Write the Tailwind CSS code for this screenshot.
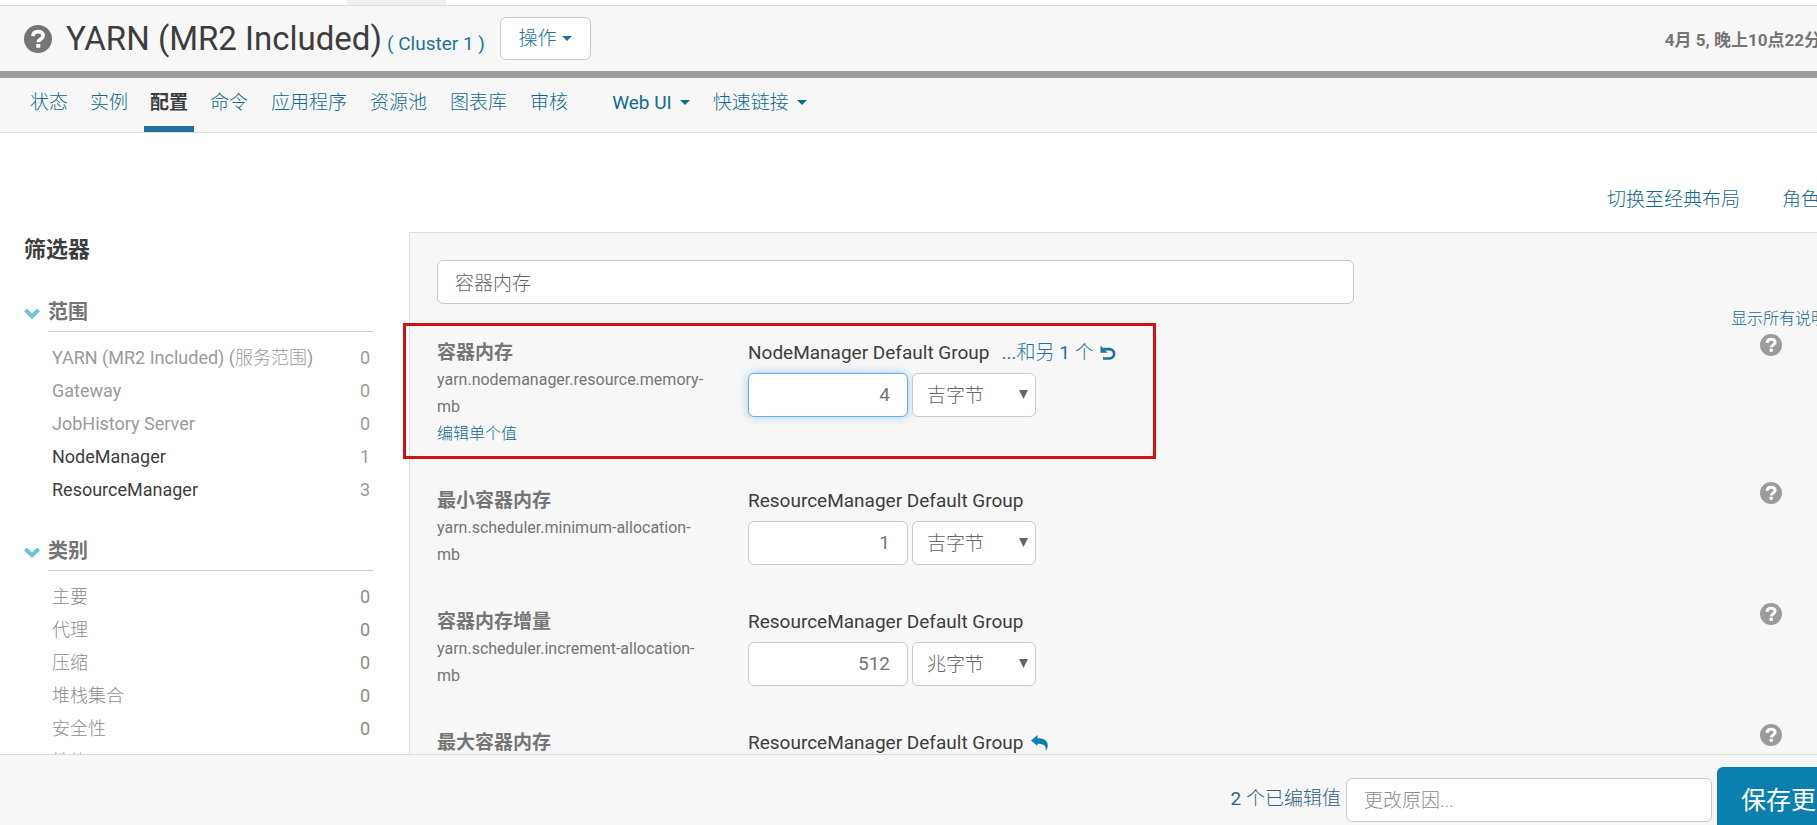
<!DOCTYPE html>
<html lang="zh-CN">
<head>
<meta charset="utf-8">
<title>YARN (MR2 Included) - 配置</title>
<script src="https://cdn.jsdelivr.net/npm/@tailwindcss/browser@4"></script>
</head>
<body class="h-screen overflow-hidden bg-white font-['Roboto','Noto_Sans_CJK_SC',sans-serif] text-[19px] leading-[27px] text-[#3d3d3d]">
<svg class="hidden">
  <symbol id="help" viewBox="0 0 28 28"><circle cx="14" cy="14" r="14" fill="currentColor"/><path d="M9 11.200C9.200 8 11.300 6.600 14.200 6.600c2.900 0 5 1.500 5 4 0 3.600-4.800 3.400-4.800 6.600" fill="none" stroke="#fff" stroke-width="3.800"/><rect x="12.300" y="18.900" width="4" height="3.800" rx=".5" fill="#fff"/></symbol>
  <symbol id="caret" viewBox="0 0 10 5"><path d="M0 0h10L5 5z" fill="currentColor"/></symbol>
  <symbol id="chevron" viewBox="0 0 16 11"><path d="M1.400 2 8 8.200 14.600 2" fill="none" stroke="currentColor" stroke-width="4"/></symbol>
  <symbol id="arrow" viewBox="0 0 9 9"><path d="M0 0h9L4.500 9z" fill="currentColor"/></symbol>
  <symbol id="undo" viewBox="0 0 16 16"><path d="M3.200 4.200h6.300a4.600 4.600 0 1 1 0 9.300H3" fill="none" stroke="currentColor" stroke-width="2.700"/><path d="M.5.5v7.200h7.200z" fill="currentColor"/></symbol>
  <symbol id="reply" viewBox="0 0 17 16"><path d="M0 5.500 6.500 0v3.200c6.500 0 10.300 2.600 10.300 7.200 0 2-.8 3.800-2 5.400.6-4.600-1.800-7-8.300-7V11z" fill="currentColor"/></symbol>
</svg>

<!-- The page is slightly wider than the window, so its right edge is cut off -->
<div class="flex h-full w-[calc(100%+40px)] flex-col">
  <div class="h-[5px] shrink-0 pl-[347px]"><div class="h-full w-[99px] bg-[#efefef]"></div></div>
  <header class="flex h-[73px] shrink-0 items-center border-t border-b-[7px] border-t-[#dcdcdc] border-b-[#9c9c9c] bg-[#f7f7f7] pr-[36px] pl-6">
    <button class="text-[#757575]" aria-label="帮助"><svg class="size-7"><use href="#help"/></svg></button>
    <h1 class="ml-[14px] text-[33px] leading-[44px]">YARN (MR2 Included)</h1>
    <a href="#" class="mt-[9px] ml-[5px] text-[19px] text-[#20739a]">( Cluster 1 )</a>
    <button class="ml-[15px] flex h-[43px] w-[91px] items-center justify-center gap-[6px] rounded-md border border-[#c9c9c9] bg-white text-[#20739a]"><span class="font-light">操作</span><svg class="h-[5px] w-[10px]"><use href="#caret"/></svg></button>
    <span class="mt-[3px] ml-auto text-[17px] font-bold text-[#757575]">4月 5, 晚上10点22分</span>
  </header>
  <nav class="flex h-[55px] shrink-0 border-b border-[#dcdcdc] bg-[#f7f7f7] pl-6 font-light text-[#126a92]">
    <a href="#" class="px-[6px] pt-[11px]">状态</a>
    <a href="#" class="ml-[10px] px-[6px] pt-[11px]">实例</a>
    <a href="#" class="ml-[10px] border-b-[6px] border-[#20739a] px-[6px] pt-[11px] font-bold text-[#3d3d3d]">配置</a>
    <a href="#" class="ml-[10px] px-[6px] pt-[11px]">命令</a>
    <a href="#" class="ml-[11px] px-[6px] pt-[11px]">应用程序</a>
    <a href="#" class="ml-[11px] px-[6px] pt-[11px]">资源池</a>
    <a href="#" class="ml-[11px] px-[6px] pt-[11px]">图表库</a>
    <a href="#" class="ml-[11px] px-[6px] pt-[11px]">审核</a>
    <button class="ml-8 flex items-center gap-2 self-start px-[6px] pt-[11px]"><span class="font-normal">Web UI</span><svg class="h-[5px] w-[10px]"><use href="#caret"/></svg></button>
    <button class="ml-[11px] flex items-center gap-2 self-start px-[6px] pt-[11px]"><span>快速链接</span><svg class="h-[5px] w-[10px]"><use href="#caret"/></svg></button>
  </nav>

  <div class="min-h-0 flex-1 overflow-hidden">
    <div class="flex justify-end gap-[42px] pt-[53px] pr-[18px] pb-[19px] font-light text-[#126a92]">
      <a href="#">切换至经典布局</a>
      <a href="#">角色组</a>
    </div>
    <div class="flex">
      <aside class="w-[409px] shrink-0 pr-9 pl-6">
        <h2 class="text-[22px] leading-[35px] font-bold">筛选器</h2>
        <section class="mt-8">
          <button class="flex w-full items-start gap-2 text-left"><svg class="mt-[9px] h-[11px] w-4 text-[#72c0dc]"><use href="#chevron"/></svg><span class="flex-1 border-b border-[#cfcfcf] pb-[5px] text-[20px] font-bold text-[#757575]">范围</span></button>
          <ul class="mt-[9px] pr-[3px] pl-7 text-[18px] leading-[33px] text-[#9b9b9b]">
            <li><a href="#" class="flex justify-between"><span>YARN (MR2 Included) (<span class="font-light">服务范围</span>)</span><span>0</span></a></li>
            <li><a href="#" class="flex justify-between"><span>Gateway</span><span>0</span></a></li>
            <li><a href="#" class="flex justify-between"><span>JobHistory Server</span><span>0</span></a></li>
            <li><a href="#" class="flex justify-between"><span class="text-[#3d3d3d]">NodeManager</span><span>1</span></a></li>
            <li><a href="#" class="flex justify-between"><span class="text-[#3d3d3d]">ResourceManager</span><span>3</span></a></li>
          </ul>
        </section>
        <section class="mt-8">
          <button class="flex w-full items-start gap-2 text-left"><svg class="mt-[9px] h-[11px] w-4 text-[#72c0dc]"><use href="#chevron"/></svg><span class="flex-1 border-b border-[#cfcfcf] pb-[5px] text-[20px] font-bold text-[#757575]">类别</span></button>
          <ul class="mt-[9px] pr-[3px] pl-7 text-[18px] leading-[33px] text-[#8c8c8c]">
            <li><a href="#" class="flex justify-between"><span class="font-light">主要</span><span>0</span></a></li>
            <li><a href="#" class="flex justify-between"><span class="font-light">代理</span><span>0</span></a></li>
            <li><a href="#" class="flex justify-between"><span class="font-light">压缩</span><span>0</span></a></li>
            <li><a href="#" class="flex justify-between"><span class="font-light">堆栈集合</span><span>0</span></a></li>
            <li><a href="#" class="flex justify-between"><span class="font-light">安全性</span><span>0</span></a></li>
            <li><a href="#" class="flex justify-between"><span class="font-light">性能</span><span>0</span></a></li>
          </ul>
        </section>
      </aside>

      <main class="flex-1 border-t border-l border-[#dcdcdc] bg-[#f7f7f7] pt-[27px] pl-[27px]">
        <input type="text" value="容器内存" aria-label="搜索" class="block h-11 w-[917px] rounded-md border border-[#c9c9c9] bg-white px-[17px] pb-[2px] font-light text-[#666] outline-none">
        <div class="text-right"><a href="#" class="mr-[30px] text-[16px] font-light text-[#126a92]">显示所有说明</a></div>

        <div class="mt-[2px] flex flex-col gap-[35px]">
          <div class="relative flex items-start">
            <div class="w-[311px] pt-[5px] pr-6 text-[16px] text-[#757575]">
              <label for="v1" class="block text-[19px] font-bold">容器内存</label>
              <p>yarn.nodemanager.resource.memory-<br>mb</p>
              <a href="#" class="block font-light text-[#126a92]">编辑单个值</a>
            </div>
            <div class="flex-1 pt-[5px]">
              <div class="flex items-center"><span>NodeManager Default Group</span><a href="#" class="ml-3 text-[#20739a]">...<span class="font-light">和另</span> 1 <span class="font-light">个</span></a><button class="ml-[6px] text-[#20739a]" aria-label="撤消"><svg class="size-4"><use href="#undo"/></svg></button></div>
              <div class="mt-[7px] flex gap-1">
                <input id="v1" type="text" value="4" class="h-11 w-40 rounded-md border border-[#66afe9] bg-white px-[17px] pb-[2px] text-right text-[#757575] shadow-[0_0_10px_#66afe999] outline-none">
                <span class="relative text-[#666]"><select aria-label="单位" class="h-11 w-[124px] appearance-none rounded-md border border-[#c9c9c9] bg-white px-[14px] font-light"><option>吉字节</option><option>兆字节</option></select><svg class="pointer-events-none absolute top-[17px] right-2 size-[9px]"><use href="#arrow"/></svg></span>
              </div>
            </div>
            <button class="mr-[75px] text-[#9b9b9b]" aria-label="帮助"><svg class="size-[22px]"><use href="#help"/></svg></button>
            <div class="pointer-events-none absolute -top-[11px] -bottom-3 -left-[34px] w-[753px] border-[3px] border-[#cc1414]"></div>
          </div>

          <div class="flex items-start">
            <div class="w-[311px] pt-[5px] pr-6 text-[16px] text-[#757575]">
              <label for="v2" class="block text-[19px] font-bold">最小容器内存</label>
              <p>yarn.scheduler.minimum-allocation-<br>mb</p>
            </div>
            <div class="flex-1 pt-[5px]">
              <div>ResourceManager Default Group</div>
              <div class="mt-[7px] flex gap-1">
                <input id="v2" type="text" value="1" class="h-11 w-40 rounded-md border border-[#c9c9c9] bg-white px-[17px] pb-[2px] text-right text-[#757575] outline-none">
                <span class="relative text-[#666]"><select aria-label="单位" class="h-11 w-[124px] appearance-none rounded-md border border-[#c9c9c9] bg-white px-[14px] font-light"><option>吉字节</option><option>兆字节</option></select><svg class="pointer-events-none absolute top-[17px] right-2 size-[9px]"><use href="#arrow"/></svg></span>
              </div>
            </div>
            <button class="mr-[75px] text-[#9b9b9b]" aria-label="帮助"><svg class="size-[22px]"><use href="#help"/></svg></button>
          </div>

          <div class="flex items-start">
            <div class="w-[311px] pt-[5px] pr-6 text-[16px] text-[#757575]">
              <label for="v3" class="block text-[19px] font-bold">容器内存增量</label>
              <p>yarn.scheduler.increment-allocation-<br>mb</p>
            </div>
            <div class="flex-1 pt-[5px]">
              <div>ResourceManager Default Group</div>
              <div class="mt-[7px] flex gap-1">
                <input id="v3" type="text" value="512" class="h-11 w-40 rounded-md border border-[#c9c9c9] bg-white px-[17px] pb-[2px] text-right text-[#757575] outline-none">
                <span class="relative text-[#666]"><select aria-label="单位" class="h-11 w-[124px] appearance-none rounded-md border border-[#c9c9c9] bg-white px-[14px] font-light"><option>兆字节</option><option>吉字节</option></select><svg class="pointer-events-none absolute top-[17px] right-2 size-[9px]"><use href="#arrow"/></svg></span>
              </div>
            </div>
            <button class="mr-[75px] text-[#9b9b9b]" aria-label="帮助"><svg class="size-[22px]"><use href="#help"/></svg></button>
          </div>

          <div class="flex items-start">
            <div class="w-[311px] pt-[5px] pr-6 text-[16px] text-[#757575]">
              <h3 class="text-[19px] font-bold">最大容器内存</h3>
            </div>
            <div class="flex flex-1 items-center pt-[5px]"><span>ResourceManager Default Group</span><button class="ml-[7px] text-[#0b7fad]" aria-label="还原"><svg class="h-4 w-[17px]"><use href="#reply"/></svg></button></div>
            <button class="mr-[75px] text-[#9b9b9b]" aria-label="帮助"><svg class="size-[22px]"><use href="#help"/></svg></button>
          </div>
        </div>
      </main>
    </div>
  </div>

  <footer class="flex h-[71px] shrink-0 items-start justify-end overflow-hidden border-t border-[#dcdcdc] bg-[#f7f7f7]">
    <a href="#" class="mt-[30px] mr-[5px] text-[#2f6384]">2 <span class="font-light">个已编辑值</span></a>
    <input type="text" placeholder="更改原因..." aria-label="更改原因" class="mt-[23px] mr-[5px] h-11 w-[366px] rounded-md border border-[#c9c9c9] bg-white px-[17px] font-light outline-none placeholder:text-[#8c8c8c]">
    <button class="mt-3 h-[66px] w-[140px] rounded-md bg-[#0b7fad] pl-6 text-left text-[25px] text-white">保存更改</button>
  </footer>
</div>
</body>
</html>
